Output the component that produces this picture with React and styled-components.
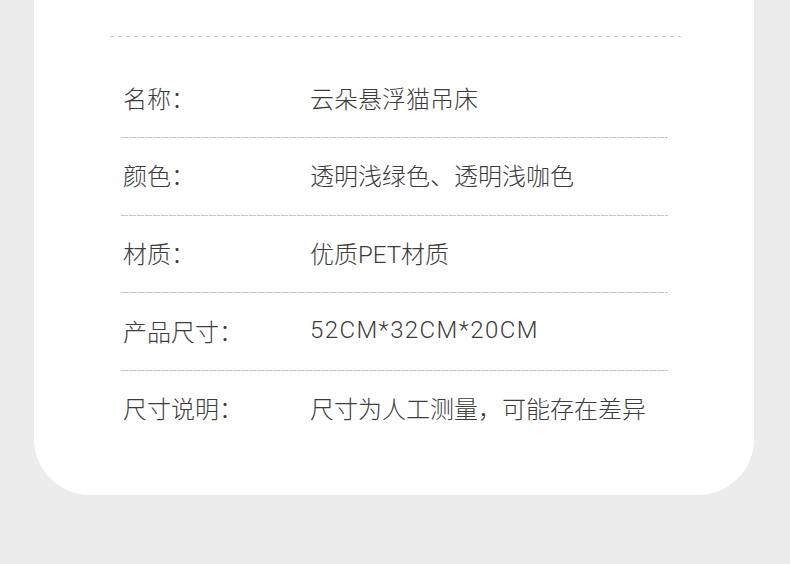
import React from 'react';
import styled, { createGlobalStyle } from 'styled-components';

const GlobalStyle = createGlobalStyle`
  body {
    margin: 0;
    background: #ececec;
    font-family: "Noto Sans CJK SC", "Noto Sans", sans-serif;
  }
`;

const Page = styled.div`
  width: 790px;
  height: 564px;
  overflow: hidden;
`;

const Card = styled.div`
  margin-left: 34px;
  width: 720px;
  height: 495px;
  background: #fff;
  border-radius: 0 0 56px 56px;
  padding-top: 36px;
  box-sizing: border-box;
`;

const Dashed = styled.div`
  height: 1px;
  margin-left: ${(p) => p.$left}px;
  width: ${(p) => p.$width}px;
  background: repeating-linear-gradient(
    to right,
    ${(p) => p.$color} 0,
    ${(p) => p.$color} ${(p) => p.$dash}px,
    transparent ${(p) => p.$dash}px,
    transparent ${(p) => p.$dash + p.$gap}px
  );
`;

const Table = styled.div`
  margin: 23.3px 0 0 87px;
  width: 547px;
`;

const Row = styled.div`
  display: flex;
  align-items: center;
  height: 76.7px;
  padding-bottom: 3px;
  box-sizing: border-box;
  font-size: 24px;
  font-weight: 300;
  color: #3c3c3c;
`;

const Label = styled.div`
  width: 189px;
  padding-left: 2px;
  box-sizing: border-box;
  flex-shrink: 0;
`;

const Value = styled.div`
  white-space: nowrap;
  font-family: "Roboto", "Noto Sans CJK SC", sans-serif;
  letter-spacing: ${(p) => (p.$latin ? '1.4px' : '0')};
`;

const rows = [
  ['名称：', '云朵悬浮猫吊床'],
  ['颜色：', '透明浅绿色、透明浅咖色'],
  ['材质：', '优质PET材质'],
  ['产品尺寸：', '52CM*32CM*20CM', true],
  ['尺寸说明：', '尺寸为人工测量，可能存在差异'],
];

export default function App() {
  return (
    <Page>
      <GlobalStyle />
      <Card>
        <Dashed $left={76} $width={571} $color="#cfcfcf" $dash={5} $gap={3} />
        <Table>
          {rows.map(([k, v, latin], i) => (
            <React.Fragment key={k}>
              <Row>
                <Label>{k}</Label>
                <Value $latin={latin}>{v}</Value>
              </Row>
              {i < rows.length - 1 && (
                <Dashed $left={0} $width={547} $color="#c6c6c6" $dash={7} $gap={1} />
              )}
            </React.Fragment>
          ))}
        </Table>
      </Card>
    </Page>
  );
}
